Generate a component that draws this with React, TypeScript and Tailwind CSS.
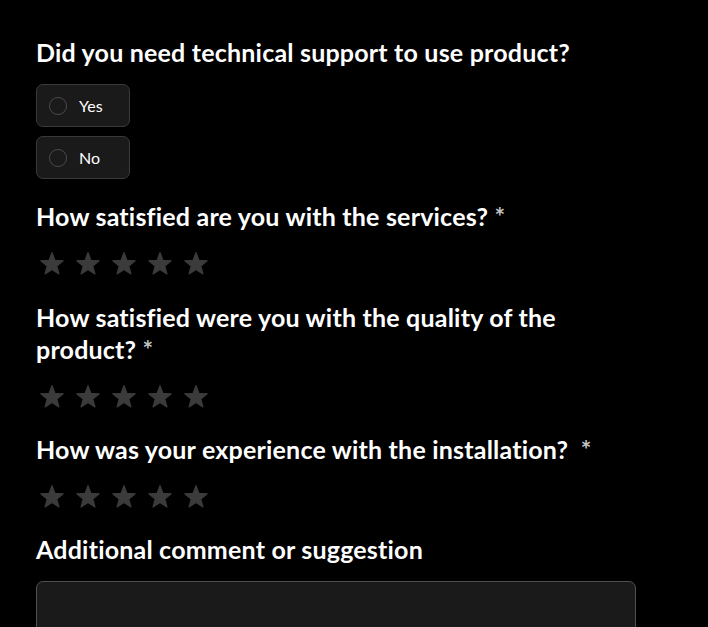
import React from "react";

function Star() {
  return (
    <svg width="24" height="23" viewBox="0 0 24 23" className="block">
      <polygon
        points="12,0.6 14.94,8.36 23.22,8.75 16.76,13.95 18.94,21.95 12,17.4 5.06,21.95 7.24,13.95 0.78,8.75 9.06,8.36"
        fill="#3b3b3b"
        stroke="#3b3b3b"
        strokeWidth="1.2"
        strokeLinejoin="round"
      />
    </svg>
  );
}

function Stars({ className }: { className: string }) {
  return (
    <div className={"flex gap-[12px] ml-[4px] " + className}>
      <Star />
      <Star />
      <Star />
      <Star />
      <Star />
    </div>
  );
}

function Radio({ label, className }: { label: string; className: string }) {
  return (
    <div
      className={
        "flex items-center w-[94px] h-[43px] rounded-[7px] border border-[#3a3a3a] bg-[#1a1a1a] pl-[12px] " +
        className
      }
    >
      <span className="block w-[18px] h-[18px] rounded-full border border-[#4a4a4a]" />
      <span className="ml-[12px] text-[16px] text-white leading-none">{label}</span>
    </div>
  );
}

const H = "text-[25px] leading-[32px] font-bold tracking-[0.2px] text-white";

export default function App() {
  return (
    <div
      className="h-screen overflow-hidden bg-black"
      style={{ fontFamily: "Lato, 'Noto Sans', sans-serif" }}
    >
      <div className="ml-[36px] pt-[36px] w-[600px]">
        <h2 className={H}>Did you need technical support to use product?</h2>
        <Radio label="Yes" className="mt-[16px]" />
        <Radio label="No" className="mt-[9px]" />

        <h2 className={H + " mt-[21px]"}>
          How satisfied are you with the services? <span className="text-[#c4c4c4]">*</span>
        </h2>
        <Stars className="mt-[20px]" />

        <h2 className={H + " mt-[26px]"}>
          How satisfied were you with the quality of the product?{" "}
          <span className="text-[#c4c4c4]">*</span>
        </h2>
        <Stars className="mt-[20px]" />

        <h2 className={H + " mt-[25px] whitespace-nowrap"}>
          How was your experience with the installation?{"\u00a0 "}
          <span className="text-[#c4c4c4]">*</span>
        </h2>
        <Stars className="mt-[20px]" />

        <h2 className={H + " mt-[25px]"}>Additional comment or suggestion</h2>
        <div className="mt-[16px] w-[600px] h-[120px] rounded-[7px] border border-[#4f4f4f] bg-[#1a1a1a]" />
      </div>
    </div>
  );
}
